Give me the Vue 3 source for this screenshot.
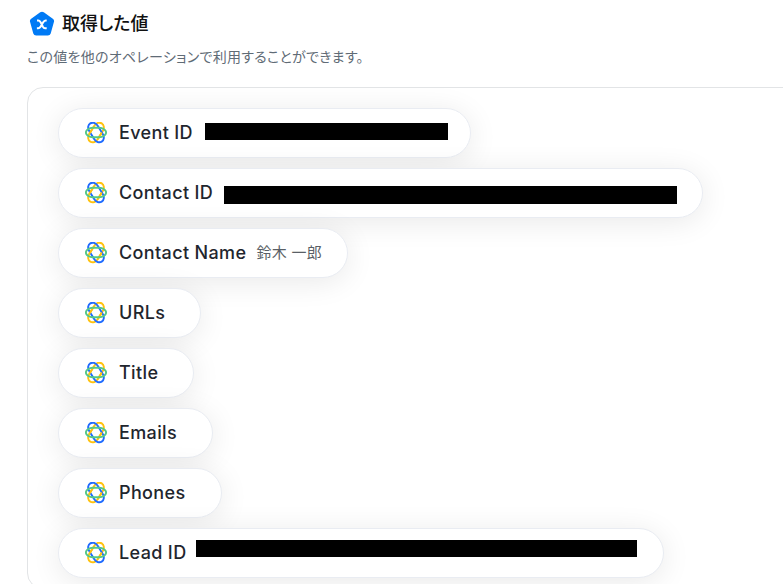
<script setup>
const fields = [
  { label: 'Event ID', width: 242, mask: { left: 2, top: 2, width: 243, height: 17 } },
  { label: 'Contact ID', width: 454, mask: { left: 1, top: 5, width: 453, height: 18 } },
  { label: 'Contact Name', value: '鈴木 一郎' },
  { label: 'URLs' },
  { label: 'Title' },
  { label: 'Emails' },
  { label: 'Phones' },
  { label: 'Lead ID', width: 441, mask: { left: -1, top: -1, width: 441, height: 17 } },
]

const px = (box) =>
  Object.fromEntries(Object.entries(box).map(([key, n]) => [key, n + 'px']))
</script>

<template>
  <main class="page">
    <header class="head">
      <svg class="badge" viewBox="0 0 26 26" aria-hidden="true">
        <path
          d="M11.2 1.3a3 3 0 0 1 3.6 0l9 6.4a3 3 0 0 1 1.1 3.4l-3.2 11.3a3 3 0 0 1-2.9 2.1H7.2a3 3 0 0 1-2.9-2.1L1.1 11.1a3 3 0 0 1 1.1-3.4z"
          fill="#007af5"
        />
        <path
          d="M8 9.500h1.200c1.200 0 1.700.5 2.200 1.400l2.500 4.900c.5.900 1 1.400 2.100 1.400h1.700M17.700 9.500h-.9c-1.100 0-1.700.5-2.300 1.300l-3.100 5.100c-.6.900-1.200 1.300-2.200 1.300h-1.300"
          fill="none"
          stroke="#fff"
          stroke-width="2"
        />
      </svg>
      <h1 class="title">取得した値</h1>
    </header>
    <p class="lead">この値を他のオペレーションで利用することができます。</p>

    <ul class="panel">
      <li v-for="field in fields" :key="field.label" class="pill">
        <svg class="icon" viewBox="-11 -10.5 22 22" aria-hidden="true">
          <g fill="none" stroke-width="1.9">
            <rect x="-10.8" y="-5" width="21.600" height="10" rx="6" ry="5" stroke="#ffc20e" transform="rotate(-58)" />
            <rect x="-10.8" y="-5" width="21.600" height="10" rx="6" ry="5" stroke="#1f6bff" transform="rotate(58)" />
            <path d="M-4.500 5H3" stroke="#ffc20e" transform="rotate(-58)" />
            <path d="M-4.500 -5H3" stroke="#ffc20e" transform="rotate(-58)" />
            <rect x="-10.1" y="-4.700" width="20.200" height="9.400" rx="7" ry="4.700" stroke="#56c788" />
          </g>
        </svg>
        <span class="label">{{ field.label }}</span>
        <span v-if="field.mask" class="value" :style="px({ width: field.width })">
          <span class="mask" :style="px(field.mask)"></span>
        </span>
        <span v-else class="value">{{ field.value }}</span>
      </li>
    </ul>
  </main>
</template>

<style>
body {
  margin: 0;
  background: #fff;
  overflow: hidden;
}
</style>

<style scoped>
.page {
  padding: 11px 0 0 27px;
  font-family: Inter, "Noto Sans CJK JP", sans-serif;
}
.head {
  display: flex;
  align-items: center;
  gap: 7px;
  padding-left: 2px;
  font-feature-settings: "palt";
}
.badge {
  width: 26px;
  height: 26px;
}
.title {
  margin: 0;
  font-size: 18px;
  line-height: 26px;
  font-weight: 500;
  color: #111;
}
.lead {
  margin: 9px 0 0;
  font-size: 14px;
  line-height: 22px;
  font-feature-settings: "palt";
  letter-spacing: 0.02em;
  color: #5f6b76;
}
.panel {
  display: flex;
  flex-direction: column;
  align-items: flex-start;
  gap: 10px;
  margin: 19px -20px 0 0;
  padding: 20px 30px 10px;
  border: 1px solid #e2e4e6;
  border-radius: 16px;
  list-style: none;
  overflow: hidden;
}
.pill {
  display: flex;
  align-items: center;
  box-sizing: border-box;
  height: 50px;
  padding: 0 25px 0 26px;
  border: 1px solid #e9ecf2;
  border-radius: 25px;
  background: #fff;
  box-shadow: 0 4px 30px rgba(0, 0, 0, 0.09);
}
.icon {
  width: 22px;
  height: 22px;
}
.label {
  margin: 0 10px 0 12px;
  font-size: 18px;
  line-height: 24px;
  font-weight: 500;
  letter-spacing: 0.02em;
  color: #1f262e;
  white-space: nowrap;
}
.value {
  position: relative;
  height: 24px;
  font-size: 15px;
  line-height: 24px;
  letter-spacing: 0.02em;
  color: #5a5f66;
  white-space: nowrap;
}
.mask {
  position: absolute;
  background: #000;
}
</style>
